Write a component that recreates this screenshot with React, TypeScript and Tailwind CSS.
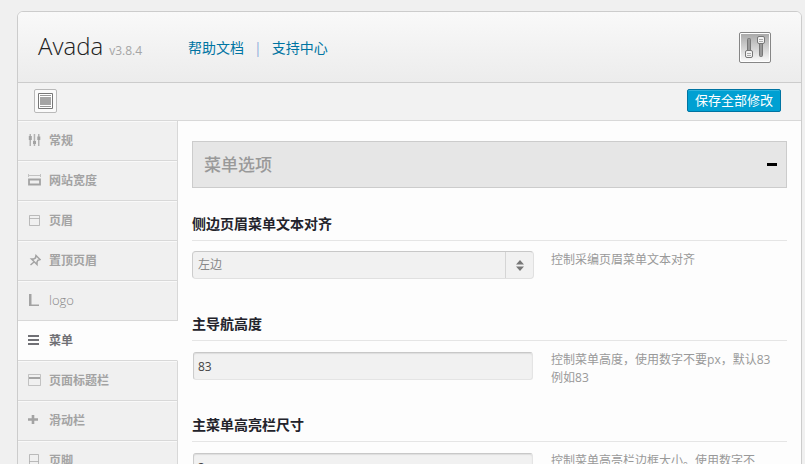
import type { ReactNode } from 'react'

const icons: Record<string, ReactNode> = {
  sliders: (
    <g fill="currentColor">
      <path d="M1.500 0H3v12H1.500zM5.700 0h1.500v12H5.700zM10 0h1.500v12H10z" opacity=".8" />
      <path d="M.8 2h3v4h-3zM5 7h3v3H5zM9.300 2.500h3v3.500h-3z" />
    </g>
  ),
  width: (
    <g fill="none" stroke="currentColor">
      <path d="M.5 0v3M12.500 0v3M1 1.500h11" opacity=".6" />
      <path d="M1 5.500h11v5H1z" strokeWidth="1.800" />
    </g>
  ),
  header: (
    <g fill="none" stroke="currentColor" opacity=".7">
      <path d="M1.500 1.500h10v10h-10zM1.500 4.500h10" />
    </g>
  ),
  pin: (
    <g fill="none" stroke="currentColor" strokeWidth="1.500">
      <path d="M8 1.500l4 4-2 .7-1 1.800v2.500L3.500 5h2.300L7.500 4zM6 8l-3.500 3" />
    </g>
  ),
  corner: <path d="M1 0h2.500v10.500H11V12H1z" fill="currentColor" />,
  menu: <path d="M0 1h11v2H0zM0 5h11v2H0zM0 9h11v2H0z" fill="currentColor" />,
  titlebar: (
    <g fill="none" stroke="currentColor">
      <path d="M.5.500h12v11H.5z" opacity=".6" />
      <path d="M1 4h11" strokeWidth="2" />
    </g>
  ),
  plus: <path d="M3.700 1h2.600v3.200H10v2.600H6.300V10H3.700V6.800H0V4.200h3.700z" fill="currentColor" />,
  footer: (
    <g fill="none" stroke="currentColor" opacity=".7">
      <path d="M1.500.500h9v11h-9zM1.500 7.500h9" />
    </g>
  ),
}

const menuItems = [
  { icon: 'sliders', label: '常规' },
  { icon: 'width', label: '网站宽度' },
  { icon: 'header', label: '页眉' },
  { icon: 'pin', label: '置顶页眉' },
  { icon: 'corner', label: 'logo' },
  { icon: 'menu', label: '菜单', active: true },
  { icon: 'titlebar', label: '页面标题栏' },
  { icon: 'plus', label: '滑动栏' },
  { icon: 'footer', label: '页脚' },
]

function Option({ id, title, help, children }: { id: string; title: string; help: ReactNode; children: ReactNode }) {
  return (
    <section className="mb-[26px]">
      <label htmlFor={id} className="block border-b border-[#e5e5e5] pb-1 text-[14px] font-bold leading-6 text-[#23232b]">
        {title}
      </label>
      <div className="mt-[10px] grid min-h-[35px] grid-cols-[29fr_20fr] items-start gap-[17px]">
        {children}
        <p className="text-[12px] leading-[18px] text-[#999]">{help}</p>
      </div>
    </section>
  )
}

function TextField({ id, value }: { id: string; value: string }) {
  return (
    <input
      id={id}
      type="text"
      defaultValue={value}
      className="m-px h-7 min-w-0 rounded-[3px] border border-[#e4e4e4] border-l-[#ccc] border-t-[#c8c8c8] bg-[#f1f1f1] px-1 text-[12px] text-[#444] shadow-[inset_0_1px_1px_#ddd] outline-none"
    />
  )
}

export default function App() {
  return (
    <div className="h-screen overflow-hidden bg-[#f0f0f0] pl-[17px] pr-[3px] pt-[11px] font-['Open_Sans','Noto_Sans_CJK_SC',sans-serif]">
      <div className="overflow-hidden rounded-t-md border border-[#ccc] bg-[#fdfdfd]">
        {/* Header */}
        <header className="flex h-[71px] items-center justify-between border-b border-[#ccc] bg-linear-to-b from-[#f9f9f9] to-[#ececec] pl-5 pr-[30px]">
          <div className="flex items-center">
            <div className="flex items-baseline gap-[6px] pb-[2px]">
              <h1 className="text-[24px] font-light leading-8 text-[#222]">Avada</h1>
              <span className="text-[12px] text-[#a5a5a5]">v3.8.4</span>
            </div>
            <nav className="ml-[46px] flex items-center gap-[10px] pt-[2px] text-[14px] leading-5 text-[#0074a2]">
              <a href="#docs">帮助文档</a>
              <span className="text-[#8faedb]">|</span>
              <a href="#support">支持中心</a>
            </nav>
          </div>
          <svg width="32" height="31" viewBox="0 0 32 31" aria-hidden="true">
            <defs>
              <linearGradient id="panel" x1="0" y1="0" x2="0" y2="1">
                <stop offset="0" stopColor="#aaa" />
                <stop offset="1" stopColor="#f8f8f8" />
              </linearGradient>
            </defs>
            <rect x=".5" y=".5" width="31" height="30" rx="1.500" fill="#fff" stroke="#868686" />
            <rect x="2" y="2" width="28" height="27" fill="url(#panel)" />
            <g stroke="#777">
              <rect x="8.500" y="6.500" width="3" height="14" rx="1" fill="#999" />
              <rect x="20.500" y="10.500" width="3" height="14" rx="1" fill="#999" />
              <rect x="6.500" y="18.500" width="7" height="7" rx="1.500" fill="#f2f2f2" />
              <rect x="18.500" y="4.500" width="7" height="7" rx="1.500" fill="#f2f2f2" />
              <path d="M8 21.500h4M8 23.500h4M20 7.500h4M20 9.500h4" stroke="#aaa" />
            </g>
          </svg>
        </header>

        {/* Toolbar */}
        <div className="flex h-[38px] items-start justify-between border-b border-[#d8d8d8] bg-[#f2f2f2] pl-4 pr-5 pt-[6px]">
          <button type="button" aria-label="展开" className="flex h-6 w-[23px] items-center justify-center rounded-xs border border-[#b9b9b9] bg-[#fafafa]">
            <svg width="15" height="16" viewBox="0 0 15 16">
              <path d="M.5.500h14v15H.5z" fill="#fff" stroke="#777" />
              <path d="M2 2.500h11M2 13.500h11" stroke="#999" />
              <path d="M2 4h11v8H2z" fill="#a5a5a5" />
            </svg>
          </button>
          <button type="button" className="flex h-[23px] w-[94px] items-center justify-center rounded-xs border border-[#0074a2] bg-[#00a0d2] text-[13px] text-white shadow-[inset_0_1px_0_#2eb3dc]">
            保存全部修改
          </button>
        </div>

        <div className="flex">
          {/* Sidebar */}
          <ul className="w-40 shrink-0 bg-[#f0f0f0]">
            {menuItems.map((item) => (
              <li
                key={item.label}
                className={
                  item.active
                    ? 'h-10 border-b border-r border-b-[#d8d8d8] border-r-[#fdfdfd] bg-[#fdfdfd] text-[#707075]'
                    : 'h-10 border-b border-r border-[#d8d8d8] text-[#a3a3a3] shadow-[inset_0_1px_0_#f9f9f9]'
                }
              >
                <a href="#section" className="flex h-full items-center gap-2 pl-[10px]">
                  <svg width="13" height="14" viewBox="0 0 13 14" aria-hidden="true">
                    {icons[item.icon]}
                  </svg>
                  <span className={item.label === 'logo' ? 'text-[13px] font-light text-[#888]' : 'text-[12px] font-bold'}>{item.label}</span>
                </a>
              </li>
            ))}
          </ul>

          {/* Content */}
          <main className="min-w-0 flex-1 px-[14px] pt-5">
            <div className="mb-6 flex h-[47px] items-center justify-between border border-[#ccc] bg-[#e6e6e6] pl-[11px] pr-[9px]">
              <h2 className="text-[17px] font-medium text-[#999]">菜单选项</h2>
              <button type="button" aria-label="收起" className="flex h-6 w-[10px] items-center">
                <span className="h-[3px] w-full bg-black" />
              </button>
            </div>

            <Option id="align" title="侧边页眉菜单文本对齐" help="控制采编页眉菜单文本对齐">
              <div className="relative">
                <select
                  id="align"
                  className="block h-7 w-full appearance-none rounded border border-[#e0e0e0] border-l-[#ccc] border-t-[#c8c8c8] bg-[#f1f1f1] px-[5px] text-[12px] text-[#888] outline-none"
                >
                  <option>左边</option>
                  <option>右边</option>
                </select>
                <span className="pointer-events-none absolute inset-y-px right-px flex w-7 items-center justify-center border-l border-[#d5d5d5] text-[#777]">
                  <svg width="8" height="11" viewBox="0 0 8 11">
                    <path d="M4 0l4 4.500H0zM4 11L0 6.500h8z" fill="currentColor" />
                  </svg>
                </span>
              </div>
            </Option>

            <Option
              id="height"
              title="主导航高度"
              help={
                <>
                  控制菜单高度，使用数字不要px，默认83
                  <br />
                  例如83
                </>
              }
            >
              <TextField id="height" value="83" />
            </Option>

            <Option id="highlight" title="主菜单高亮栏尺寸" help="控制菜单高亮栏边框大小。使用数字不">
              <TextField id="highlight" value="3" />
            </Option>
          </main>
        </div>
      </div>
    </div>
  )
}
